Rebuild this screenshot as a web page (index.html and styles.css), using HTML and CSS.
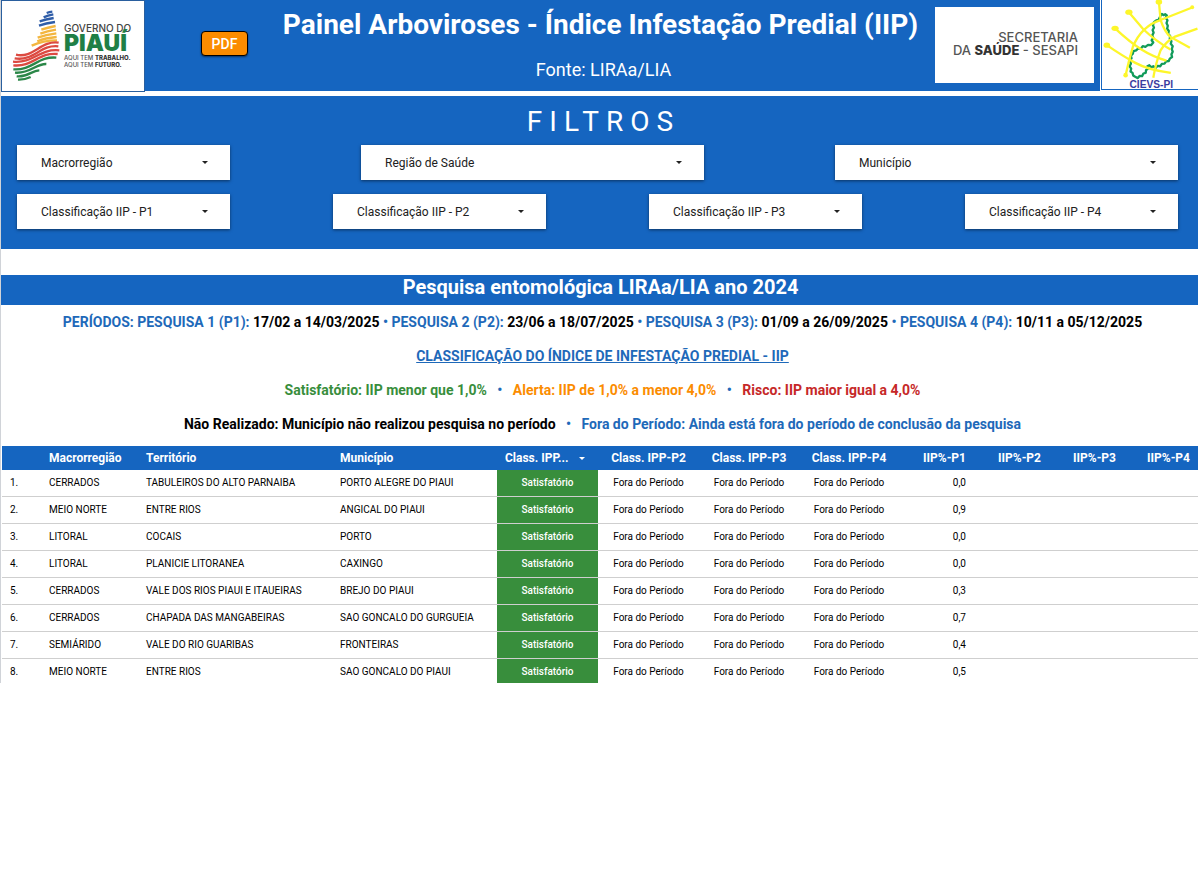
FILE: index.html
```
<!DOCTYPE html>
<html lang="pt-BR">
<head>
  <meta charset="UTF-8" />
  <meta name="viewport" content="width=device-width, initial-scale=1.0"/>
  <title>Painel Arboviroses</title>
  <link rel="stylesheet" href="styles.css">
</head>
<body>
  <div class="report">
    <header class="header">
      <div class="logo-piaui">
        <svg viewBox="0 0 426 270" role="img" aria-label="Governo do Piauí">
          <g fill="none" stroke-width="7">
            <g stroke="#2f5da8">
              <path d="M134 36q8-3 17-4"/>
              <path d="M125 49q12-6 29-9"/>
              <path d="M113 61q18-6 42-10"/>
              <path d="M111 74q20-7 48-11"/>
            </g>
            <g stroke="#f3b63f">
              <path d="M118 86q18-6 43-11"/>
              <path d="M115 98q20-8 47-12"/>
              <path d="M107 110q24-9 56-13"/>
              <path d="M106 121q24-10 58-13"/>
              <path d="M89 134q35-16 76-16"/>
            </g>
            <g stroke="#dc4a41">
              <path d="M42 161c52 12 75-44 128-36"/>
              <path d="M38 172c58 10 76-42 131-36"/>
              <path d="M33 182c62 6 78-40 139-34"/>
              <path d="M34 193c58 6 76-40 133-34"/>
            </g>
            <g stroke="#2b8748">
              <path d="M34 205c57 4 74-40 129-35"/>
              <path d="M39 215c45 4 64-28 94-26"/>
              <path d="M44 226c34 4 44-18 68-18"/>
              <path d="M48 236q18 1 38-8"/>
            </g>
          </g>
        </svg>
        <div class="gov">
          <div class="gov-name">GOVERNO DO</div>
          <div class="gov-state">PIAUÍ</div>
          <div class="gov-motto">AQUI TEM <b>TRABALHO.</b></div>
          <div class="gov-motto">AQUI TEM <b>FUTURO.</b></div>
        </div>
      </div>
      <button class="pdf" type="button">PDF</button>
      <div class="title">
        <h1>Painel Arboviroses - Índice Infestação Predial (IIP)</h1>
        <p>Fonte: LIRAa/LIA</p>
      </div>
      <div class="logo-sesapi">
        <div>SECRETARIA</div>
        <div>DA <b>SAÚDE</b> - SESAPI</div>
      </div>
      <div class="logo-cievs">
        <svg viewBox="12 0 288 270" role="img" aria-label="CIEVS-PI">
          <path d="M188 48L192 42L197 46L202 43L207 47L204 54L209 62L206 70L210 78L208 87L213 94L211 103L217 109L216 118L221 125L219 133L225 140L222 149L225 157L221 165L223 173L216 178L213 185L205 186L200 193L192 194L187 201L179 200L173 206L166 201L160 204L154 198L148 201L150 208L144 213L143 221L136 223L132 231L125 230L119 237L111 233L105 229L103 221L97 217L99 208L94 201L98 193L95 184L100 177L98 169L104 163L106 155L114 153L120 147L128 148L134 140L142 142L150 136L159 137L166 129L161 122L166 115L163 107L167 99L164 91L168 84L165 76L168 67L175 62L182 60Z" fill="none" stroke="#119b5a" stroke-width="7" stroke-linejoin="round"/>
          <g fill="none" stroke="#fdf62a" stroke-width="7">
            <path d="M25 137Q70 168 110 190T219 221"/>
            <path d="M50 86Q95 128 130 150T206 184"/>
            <path d="M92 37L135 88Q170 122 218 150"/>
            <path d="M183 5L188 60Q200 96 218 112L277 145"/>
            <path d="M82 228Q92 182 104 142Q130 78 190 60L286 22"/>
            <path d="M166 236Q174 190 188 153Q205 125 230 112L300 87"/>
          </g>
          <g fill="#fdf62a">
            <ellipse cx="25" cy="137" rx="10" ry="8"/>
            <ellipse cx="50" cy="86" rx="11" ry="8"/>
            <ellipse cx="92" cy="37" rx="11" ry="8"/>
            <ellipse cx="183" cy="6" rx="10" ry="8"/>
            <circle cx="284" cy="22" r="6"/>
            <circle cx="82" cy="228" r="7"/>
          </g>
          <text class="cievs-name" x="160" y="267" text-anchor="middle">CIEVS-PI</text>
        </svg>
      </div>
    </header>

    <section class="filters">
      <h2>FILTROS</h2>
      <div class="filter-row regions">
        <div class="filter"><select aria-label="Macrorregião"><option>Macrorregião</option></select></div>
        <div class="filter"><select aria-label="Região de Saúde"><option>Região de Saúde</option></select></div>
        <div class="filter"><select aria-label="Município"><option>Município</option></select></div>
      </div>
      <div class="filter-row classes">
        <div class="filter"><select aria-label="Classificação IIP - P1"><option>Classificação IIP - P1</option></select></div>
        <div class="filter"><select aria-label="Classificação IIP - P2"><option>Classificação IIP - P2</option></select></div>
        <div class="filter"><select aria-label="Classificação IIP - P3"><option>Classificação IIP - P3</option></select></div>
        <div class="filter"><select aria-label="Classificação IIP - P4"><option>Classificação IIP - P4</option></select></div>
      </div>
    </section>

    <h2 class="survey-title">Pesquisa entomológica LIRAa/LIA ano 2024</h2>

    <section class="legend">
      <p>PERÍODOS: PESQUISA 1 (P1): <span class="black">17/02 a 14/03/2025</span> • PESQUISA 2 (P2): <span class="black">23/06 a 18/07/2025</span> • PESQUISA 3 (P3): <span class="black">01/09 a 26/09/2025</span> • PESQUISA 4 (P4): <span class="black">10/11 a 05/12/2025</span></p>
      <p class="underline">CLASSIFICAÇÃO DO ÍNDICE DE INFESTAÇÃO PREDIAL - IIP</p>
      <p><span class="green">Satisfatório: IIP menor que 1,0%</span> &nbsp; • &nbsp; <span class="orange">Alerta: IIP de 1,0% a menor 4,0%</span> &nbsp; • &nbsp; <span class="red">Risco: IIP maior igual a 4,0%</span></p>
      <p><span class="black">Não Realizado: Município não realizou pesquisa no período</span> &nbsp; • &nbsp; Fora do Período: Ainda está fora do período de conclusão da pesquisa</p>
    </section>

    <div class="table-wrap">
      <table>
        <colgroup>
          <col class="c-index"><col class="c-macro"><col class="c-terr"><col class="c-mun">
          <col class="c-sorted"><col class="c-sorted"><col class="c-class"><col class="c-class">
          <col class="c-iip"><col class="c-iip"><col class="c-iip"><col>
        </colgroup>
        <thead>
          <tr>
            <th></th>
            <th>Macrorregião</th>
            <th>Território</th>
            <th>Município</th>
            <th class="sorted">Class. IPP...</th>
            <th class="center">Class. IPP-P2</th>
            <th class="center">Class. IPP-P3</th>
            <th class="center">Class. IPP-P4</th>
            <th class="num">IIP%-P1</th>
            <th class="num">IIP%-P2</th>
            <th class="num">IIP%-P3</th>
            <th class="num">IIP%-P4</th>
          </tr>
        </thead>
        <tbody id="rows"></tbody>
      </table>
    </div>
  </div>

  <script>
    const data = [
      ["CERRADOS", "TABULEIROS DO ALTO PARNAIBA", "PORTO ALEGRE DO PIAUI", "0,0"],
      ["MEIO NORTE", "ENTRE RIOS", "ANGICAL DO PIAUI", "0,9"],
      ["LITORAL", "COCAIS", "PORTO", "0,0"],
      ["LITORAL", "PLANICIE LITORANEA", "CAXINGO", "0,0"],
      ["CERRADOS", "VALE DOS RIOS PIAUI E ITAUEIRAS", "BREJO DO PIAUI", "0,3"],
      ["CERRADOS", "CHAPADA DAS MANGABEIRAS", "SAO GONCALO DO GURGUEIA", "0,7"],
      ["SEMIÁRIDO", "VALE DO RIO GUARIBAS", "FRONTEIRAS", "0,4"],
      ["MEIO NORTE", "ENTRE RIOS", "SAO GONCALO DO PIAUI", "0,5"]
    ];

    const pending = '<td class="center">Fora do Período</td>'.repeat(3);

    document.getElementById("rows").innerHTML = data.map(([macro, terr, mun, iip], i) => `
      <tr>
        <td>${i + 1}.</td>
        <td>${macro}</td>
        <td>${terr}</td>
        <td>${mun}</td>
        <td class="ok">Satisfatório</td>
        ${pending}
        <td class="num">${iip}</td>
        <td></td><td></td><td></td>
      </tr>`).join("");
  </script>
</body>
</html>
```
FILE: styles.css
```
* { box-sizing: border-box; }
body {
  margin: 0;
  font-family: Roboto, sans-serif;
  background: white;
  color: black;
}
h1, h2, p { margin: 0; }
.report {
  border-left: 1px solid #d0d3d8;
}

/* header */
.header {
  display: flex;
  align-items: flex-start;
  height: 91px;
  background: #1565c0;
  color: white;
}
.logo-piaui {
  flex: none;
  display: grid;
  width: 144px;
  height: 92px;
  background: white;
  border: 1px solid #2a5f9e;
}
.logo-piaui svg, .gov {
  grid-area: 1 / 1;
}
.logo-piaui svg, .logo-cievs svg {
  display: block;
  width: 100%;
  height: 100%;
}
.gov {
  padding: 22px 0 0 62px;
  font-family: Inter, sans-serif;
  font-weight: 500;
  white-space: nowrap;
}
.gov-name { font-size: 10px; line-height: 10px; color: #444; }
.gov-state { font-size: 23px; font-weight: 900; line-height: 21px; color: #1f7f46; }
.gov-motto { font-size: 6px; line-height: 7px; color: #555; }
.gov-motto b { font-weight: 800; color: #333; }
.pdf {
  flex: none;
  width: 47px;
  height: 25px;
  margin: 31px 18px 0 56px;
  padding: 0;
  border: 1px solid black;
  border-radius: 4px;
  background: #fb8c00;
  color: white;
  font: 500 14px Roboto, sans-serif;
  box-shadow: 0 1px 2px rgba(0,0,0,0.5);
}
.title {
  flex: 1;
  text-align: center;
}
.title h1 {
  margin-top: 9px;
  font-size: 28px;
  font-weight: 700;
  line-height: 32px;
  white-space: nowrap;
}
.title p {
  margin-top: 17px;
  padding-left: 6px;
  font-size: 18px;
  line-height: 24px;
}
.logo-sesapi {
  flex: none;
  width: 159px;
  height: 76px;
  margin-top: 7px;
  padding: 24px 16px 0 0;
  background: white;
  color: #555;
  font: 500 13px/13px Inter, sans-serif;
  text-align: right;
  white-space: nowrap;
}
.logo-sesapi b { font-weight: 800; color: #333; }
.logo-cievs {
  flex: none;
  width: 97px;
  height: 90px;
  margin-left: 7px;
  background: white;
  border: 1px solid #1565c0;
  border-width: 0 0 1px 1px;
  outline: 1px solid white;
}
.cievs-name { font: bold 31px "Liberation Sans", sans-serif; fill: #3b3a9e; }

/* filters */
.filters {
  margin-top: 5px;
  padding: 10px 20px 20px 16px;
  background: #1565c0;
}
.filters h2 {
  margin-bottom: 7px;
  padding-left: 12px;
  color: white;
  font-size: 28px;
  font-weight: 400;
  line-height: 32px;
  letter-spacing: 7px;
  text-align: center;
}
.filter-row {
  display: grid;
}
.regions {
  grid-template-columns: 213fr 343fr 343fr;
  column-gap: 131px;
  margin-bottom: 14px;
}
.classes {
  grid-template-columns: repeat(4, 1fr);
  column-gap: 103px;
}
.filter {
  position: relative;
}
.filter::after {
  content: "";
  position: absolute;
  top: 16px;
  right: 22px;
  border: 3px solid transparent;
  border-top-color: #222;
  border-bottom: 0;
  pointer-events: none;
}
.filter select {
  appearance: none;
  display: block;
  width: 100%;
  height: 35px;
  padding: 0 24px;
  border: none;
  border-radius: 0;
  background: white;
  color: #212121;
  font: 12px Roboto, sans-serif;
  box-shadow: 0 1px 3px rgba(0,0,0,0.5);
}

/* legend */
.survey-title {
  height: 30px;
  margin-top: 26px;
  padding-left: 2px;
  background: #1565c0;
  color: white;
  font-size: 20px;
  font-weight: 700;
  line-height: 24px;
  text-align: center;
}
.legend {
  padding: 0 0 5px 6px;
  color: #1e69b9;
  font-size: 14px;
  font-weight: 700;
  line-height: 34px;
  text-align: center;
}
.underline { text-decoration: underline; }
.black { color: black; }
.green { color: #388e3c; }
.orange { color: #fb8c00; }
.red { color: #c62828; }

/* table, the last row is cut by the frame */
.table-wrap {
  height: 237px;
  padding-left: 1px;
  overflow: hidden;
}
table {
  width: 100%;
  table-layout: fixed;
  border-collapse: separate;
  border-spacing: 0;
}
.c-index { width: 39px; }
.c-macro { width: 97px; }
.c-terr { width: 194px; }
.c-mun { width: 165px; }
.c-sorted { width: 101px; }
.c-class { width: 100px; }
.c-iip { width: 75px; }
th, td {
  padding: 0 8px;
  text-align: left;
  white-space: nowrap;
}
th {
  height: 24px;
  background: #1565c0;
  color: white;
  font-size: 12px;
  font-weight: 700;
}
td {
  height: 27px;
  padding-bottom: 2px;
  border-bottom: 1px solid #cfcfcf;
  font-size: 10px;
}
.center { text-align: center; }
.num { text-align: right; }
.sorted::after {
  content: "";
  display: inline-block;
  margin-left: 11px;
  border: 3px solid transparent;
  border-top-color: white;
  border-bottom: 0;
  vertical-align: middle;
}
.ok {
  background: #388e3c;
  color: white;
  font-weight: 500;
  text-align: center;
}
```
